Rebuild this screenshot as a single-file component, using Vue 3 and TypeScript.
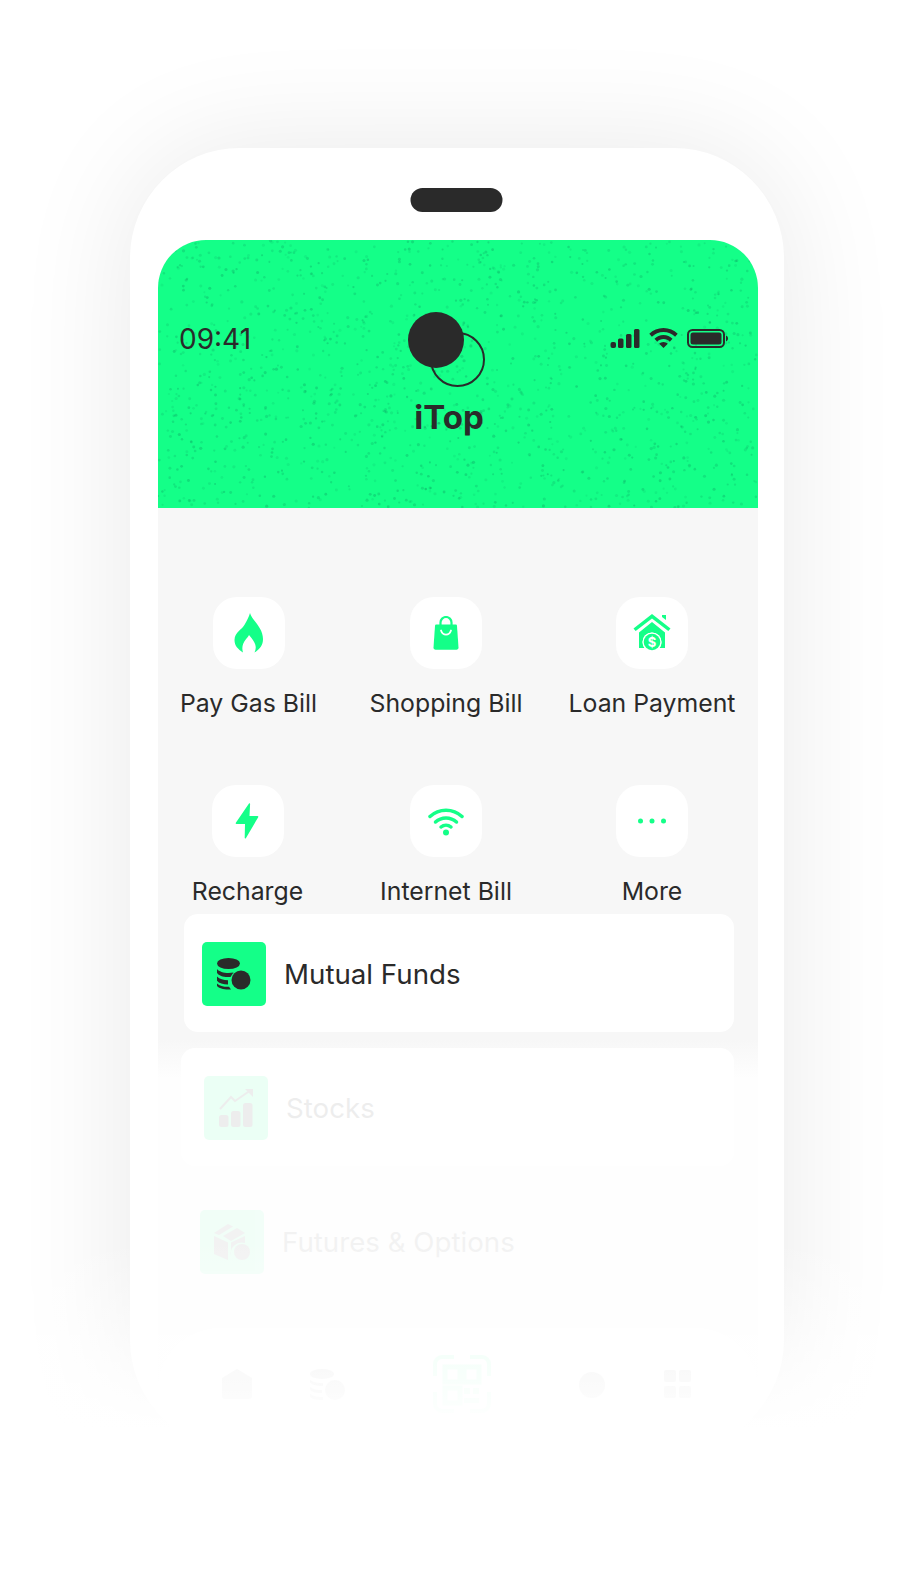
<script setup lang="ts">
interface Service {
  label: string
  icon: string
}

interface Speck {
  x: number
  y: number
  r: number
  o: number
}

const services: Service[] = [
  { label: 'Pay Gas Bill', icon: 'flame' },
  { label: 'Shopping Bill', icon: 'bag' },
  { label: 'Loan Payment', icon: 'house' },
  { label: 'Recharge', icon: 'bolt' },
  { label: 'Internet Bill', icon: 'wifi' },
  { label: 'More', icon: 'more' },
]

// seeded so the grain comes out the same on every load
let seed = 4127
function rand() {
  seed = (seed * 16807) % 2147483647
  return seed / 2147483647
}

const specks: Speck[] = []
for (let i = 0; i < 1500; i++) {
  specks.push({
    x: rand() * 600,
    y: rand() * 268,
    r: 1 + rand() * 0.6,
    o: 0.1 + rand() * 0.2,
  })
}
</script>

<template>
  <div class="page">
    <div class="phone">
      <div class="notch"></div>
      <div class="screen">
        <header class="hero">
          <svg class="grain" width="600" height="268" aria-hidden="true">
            <circle
              v-for="(s, i) in specks"
              :key="i"
              :cx="s.x"
              :cy="s.y"
              :r="s.r"
              :opacity="s.o"
            />
          </svg>
          <div class="status">
            <span class="time">09:41</span>
            <div class="status-icons">
              <svg width="30" height="19" viewBox="0 0 30 19">
                <rect x="0.5" y="13" width="5.5" height="6" rx="2" />
                <rect x="8" y="9.5" width="5.5" height="9.5" rx="1.5" />
                <rect x="16" y="5" width="5.5" height="14" rx="1.5" />
                <rect x="24" y="0" width="5.5" height="19" rx="1.5" />
              </svg>
              <svg width="29" height="20" viewBox="0 0 29 20">
                <path d="M14.5 0C9 0 4 2.2 0.3 5.8l2.6 3C5.9 5.900 10 4 14.500 4s8.600 1.900 11.600 4.800l2.600-3C25 2.200 20 0 14.500 0z" />
                <path d="M14.500 7c-3.500 0-6.700 1.400-9 3.700l2.700 3c1.600-1.700 3.800-2.700 6.300-2.700s4.700 1 6.300 2.700l2.700-3c-2.300-2.300-5.500-3.700-9-3.700z" />
                <path d="M14.500 14c-1.700 0-3.200.7-4.300 1.800l4.300 4.200 4.300-4.200c-1.100-1.100-2.600-1.800-4.300-1.800z" />
              </svg>
              <svg width="41" height="19" viewBox="0 0 41 19">
                <rect x="1" y="1" width="36" height="17" rx="4.500" class="batt-shell" />
                <rect x="3.500" y="3.500" width="31" height="12" rx="2.500" />
                <path d="M39 6.500c1.200.4 2 1.600 2 3s-.8 2.600-2 3z" />
              </svg>
            </div>
          </div>
          <div class="brand">
            <div class="logo">
              <span class="logo-ring"></span>
              <span class="logo-dot"></span>
            </div>
            <span class="brand-name">iTop</span>
          </div>
        </header>

        <section class="services">
          <div v-for="item in services" :key="item.label" class="service">
            <div class="tile">
              <svg v-if="item.icon === 'flame'" width="30" height="40" viewBox="0 0 30 40">
                <path d="M16 0c1 6 13 14 13 26 0 6-3 10-8.500 13.500 2.500-5.500 1.500-9.500-5.500-17.500-1 3-9 8-6 17.500C4 36 .5 33 .5 27 .5 19 8 17 11 11c2-4 4-7 5-11z" />
              </svg>
              <svg v-else-if="item.icon === 'bag'" width="26" height="34" viewBox="0 0 26 34">
                <path d="M7.500 9V6.500a5.500 5.500 0 0 1 11 0V9" fill="none" stroke="#14ff88" stroke-width="2.200" />
                <path d="M3.500 8.500h19c.9 0 1.400.5 1.500 1.400L25.500 31.500c0 1.300-.8 2.200-2 2.200h-21c-1.200 0-2-.9-2-2.200L2 9.900c.1-.9.600-1.400 1.500-1.400z" />
                <path d="M8 14.500c1 3 3 4.200 5 4.200s4-1.200 5-4.200" fill="none" stroke="#fff" stroke-width="1.800" stroke-linecap="round" />
              </svg>
              <svg v-else-if="item.icon === 'house'" width="38" height="38" viewBox="0 0 38 38">
                <path d="M29 1h4v5l-4-3z" />
                <path d="M.500 14.500 19 0l18.500 14.500-2.200 2.600L19 4.500 2.700 17.100z" />
                <path d="M19 8 6 18.500V34h5.500a10 10 0 0 1-2-6 9.500 9.500 0 0 1 19 0c0 2.300-.7 4.300-2 6H32V18.500z" />
                <circle cx="19" cy="28" r="9.500" fill="#fff" />
                <circle cx="19" cy="28" r="8.300" />
                <text x="19" y="32.500" class="house-dollar">$</text>
              </svg>
              <svg v-else-if="item.icon === 'bolt'" class="bolt-icon" width="24" height="36" viewBox="0 0 24 36">
                <path d="M14 .5c.5-.4 1.100-.2 1.100.6L14.500 13h8c.8 0 1 .6.700 1.200L11 35c-.5.900-1.300.6-1.300-.3L10 21H1.500C.6 21 .4 20.300 1 19.600z" />
              </svg>
              <svg v-else-if="item.icon === 'wifi'" width="36" height="30" viewBox="0 0 36 30" class="wifi-icon">
                <path d="M2 10.500C11 2 25 2 34 10.500" />
                <path d="M7.500 16c6-5.500 15-5.500 21 0" />
                <path d="M13 21c3-2.500 7-2.500 10 0" />
                <circle cx="18" cy="26.500" r="3" />
              </svg>
              <svg v-else width="28" height="8" viewBox="0 0 28 8">
                <circle cx="2.500" cy="4" r="2.500" />
                <circle cx="14" cy="4" r="2.500" />
                <circle cx="25.500" cy="4" r="2.500" />
              </svg>
            </div>
            <span class="service-label">{{ item.label }}</span>
          </div>
        </section>

        <div class="fund-card">
          <div class="fund-icon">
            <svg width="34" height="32" viewBox="0 0 34 32">
              <ellipse cx="11.500" cy="5.500" rx="11.500" ry="5.500" />
              <path d="M0 11c2 2.500 6.500 4 11.500 4 1.500 0 3.500-.2 5-.5l-3 4.400c-6 .8-11.500-1-13.500-3.900z" />
              <path d="M0 18.500c2.500 2.500 6.500 3.700 11 3.700v4.300c-5 0-9-1.300-11-3.800z" />
              <path d="M0 25.500c2.500 2.500 7 3.500 12 3.300l2 2.700c-6.500.5-12-1-14-3.500z" />
              <circle cx="24" cy="22" r="9.500" />
            </svg>
          </div>
          <span class="fund-label">Mutual Funds</span>
        </div>

        <div class="ghost-card stocks">
          <div class="fund-icon">
            <svg width="34" height="38" viewBox="0 0 34 38">
              <rect x="0" y="26" width="9.500" height="12" rx="2.500" />
              <rect x="12" y="22" width="9.500" height="16" rx="2.500" />
              <rect x="24" y="14" width="9.500" height="24" rx="2.500" />
              <path d="M1 20 12 8l4 4L32 1" fill="none" stroke="#2a2a2a" stroke-width="2" />
              <path d="M26 0h8v8z" />
            </svg>
          </div>
          <span class="fund-label">Stocks</span>
        </div>

        <div class="ghost-row futures">
          <div class="fund-icon">
            <svg width="36" height="36" viewBox="0 0 36 36">
              <path d="M0 9 14 0l5 2.500L5 11z" />
              <path d="M9 12 23 4l8 5-14 8z" />
              <path d="M0 12l14 6.500V36L0 30z" />
              <path d="M17 18.500 31 12v7a11 11 0 0 0-14 13z" />
              <circle cx="28" cy="28" r="8" />
            </svg>
          </div>
          <span class="fund-label">Futures &amp; Options</span>
        </div>

        <nav class="tabbar">
          <svg class="tab-home" width="30" height="30" viewBox="0 0 30 30">
            <path d="M15 0 30 9v18a3 3 0 0 1-3 3H3a3 3 0 0 1-3-3V9z" />
          </svg>
          <svg class="tab-coins" width="35" height="31" viewBox="0 0 35 31">
            <ellipse cx="12" cy="5" rx="12" ry="5" />
            <path d="M0 11c3 2.500 8 3 13 3v3c-6 0-11-1-13-3.500z" />
            <path d="M0 18c3 2.500 7 3 12 3v3c-6 0-11-1-12-3.500z" />
            <path d="M0 25c3 2.500 7 3 13 3v3c-7 0-12-1-13-3.500z" />
            <circle cx="25" cy="21" r="10" />
          </svg>
          <svg class="tab-scan" width="58" height="58" viewBox="0 0 58 58">
            <path d="M21 2H9a7 7 0 0 0-7 7v12M37 2h12a7 7 0 0 1 7 7v12M21 56H9a7 7 0 0 1-7-7V37M37 56h12a7 7 0 0 0 7-7V37" fill="none" stroke="#14ff88" stroke-width="4" />
            <path d="M12 12h15v15H12zM31 12h15v15H31zM12 33h15v15H12z" fill="none" stroke="#14ff88" stroke-width="5" />
            <path d="M31 33h6v6h-6zM40 33h6v6h-6zM31 43h15v5H31z" fill="#14ff88" />
          </svg>
          <svg class="tab-clock" width="26" height="26" viewBox="0 0 26 26">
            <circle cx="13" cy="13" r="13" />
          </svg>
          <svg class="tab-grid" width="27" height="28" viewBox="0 0 27 28">
            <rect width="12" height="12" rx="2" />
            <rect x="15" width="12" height="12" rx="2" />
            <rect y="16" width="12" height="12" rx="2" />
            <rect x="15" y="16" width="12" height="12" rx="2" />
          </svg>
        </nav>
      </div>
    </div>
    <div class="bottom-fade"></div>
  </div>
</template>

<style>
html,
body {
  margin: 0;
  background: #fff;
}
</style>

<style scoped>
.page {
  position: relative;
  width: 922px;
  height: 1585px;
  overflow: hidden;
  background: #fff;
  font-family: Inter, "Liberation Sans", sans-serif;
  color: #2a2a2a;
  padding-top: 148px;
  box-sizing: border-box;
}

.phone {
  width: 654px;
  height: 1302px;
  margin-left: 130px;
  background: #fff;
  border-radius: 110px;
  box-shadow: 0 0 120px rgba(0, 0, 0, 0.09);
  padding: 40px 26px 0 28px;
  box-sizing: border-box;
  overflow: hidden;
}

.bottom-fade {
  position: absolute;
  left: 0;
  right: 0;
  top: 1240px;
  bottom: 0;
  background: linear-gradient(rgba(255, 255, 255, 0), #fff 190px);
  pointer-events: none;
}

.notch {
  width: 92px;
  height: 24px;
  border-radius: 12px;
  background: #2a2a2a;
  margin: 0 auto 28px;
  transform: translateX(-1.500px);
}

.screen {
  height: 1210px;
  background: linear-gradient(#f7f7f7 0, #f7f7f7 800px, #fefefe 838px);
  border-radius: 48px 48px 0 0;
}

.hero {
  position: relative;
  height: 268px;
  background: #14ff88;
  border-radius: 48px 48px 0 0;
  overflow: hidden;
  box-sizing: border-box;
  padding-top: 75px;
}

.grain {
  position: absolute;
  inset: 0;
  fill: #0b8a58;
}

.status {
  position: relative;
  display: flex;
  justify-content: space-between;
  align-items: center;
  height: 46px;
  padding: 0 30px 0 21px;
}

.time {
  font-size: 28px;
  line-height: 46px;
  padding-top: 2px;
}

.status-icons {
  display: flex;
  align-items: center;
  gap: 9px;
}

.status-icons svg {
  fill: #2a2a2a;
}

.batt-shell {
  fill: none;
  stroke: #2a2a2a;
  stroke-width: 2;
}

.brand {
  position: absolute;
  top: 72px;
  left: 250px;
  width: 78px;
  display: flex;
  flex-direction: column;
  align-items: center;
}

.logo {
  position: relative;
  width: 78px;
  height: 76px;
}

.logo-dot {
  position: absolute;
  left: 0;
  top: 0;
  width: 56px;
  height: 56px;
  border-radius: 50%;
  background: #2a2a2a;
}

.logo-ring {
  position: absolute;
  left: 22px;
  top: 20px;
  width: 51px;
  height: 51px;
  border-radius: 50%;
  border: 2px solid #2a2a2a;
}

.brand-name {
  font-size: 33px;
  font-weight: 700;
  line-height: 40px;
  margin-top: 9px;
  transform: translateX(2px);
}

.services {
  display: grid;
  grid-template-columns: 181px 214px 198px;
  row-gap: 67px;
  padding-top: 89px;
}

.service {
  display: flex;
  flex-direction: column;
  align-items: center;
  gap: 19px;
}

.service:nth-child(4) {
  margin-left: -2px;
}

.tile {
  width: 72px;
  height: 72px;
  background: #fff;
  border-radius: 24px;
  display: flex;
  align-items: center;
  justify-content: center;
}

.tile svg {
  fill: #14ff88;
}

.bolt-icon {
  margin-right: 2px;
}

.wifi-icon path {
  fill: none;
  stroke: #14ff88;
  stroke-width: 3.500;
  stroke-linecap: round;
}

.house-dollar {
  font-family: Inter, "Liberation Sans", sans-serif;
  font-size: 13px;
  font-weight: 700;
  fill: #fff;
  text-anchor: middle;
}

.service-label {
  font-size: 24.800px;
  line-height: 30px;
  white-space: nowrap;
}

.fund-card {
  display: flex;
  align-items: center;
  gap: 18px;
  height: 118px;
  margin: 8px 24px 0 26px;
  padding: 2px 0 0 18px;
  box-sizing: border-box;
  background: #fff;
  border-radius: 14px;
}

.fund-icon {
  width: 64px;
  height: 64px;
  flex: none;
  border-radius: 5px;
  background: #14ff88;
  display: flex;
  align-items: center;
  justify-content: center;
}

.fund-icon svg {
  fill: #2a2a2a;
}

.fund-label {
  font-size: 27.700px;
}

.ghost-card,
.ghost-row {
  display: flex;
  align-items: center;
  gap: 18px;
}

.stocks {
  height: 118px;
  margin: 16px 24px 0 23px;
  padding: 2px 0 0 23px;
  box-sizing: border-box;
  background: #fff;
  border-radius: 14px;
}

.stocks > * {
  opacity: 0.08;
}

.futures {
  height: 64px;
  margin: 44px 24px 0 42px;
}

.futures > * {
  opacity: 0.05;
}

.tabbar {
  position: relative;
  height: 130px;
  margin-top: 54px;
  background: #fff;
  border-radius: 62px 62px 0 0;
}

.tabbar svg {
  position: absolute;
  fill: #2a2a2a;
  opacity: 0.08;
}

.tab-home {
  left: 64px;
  top: 41px;
}

.tab-coins {
  left: 152px;
  top: 41px;
}

.tabbar .tab-scan {
  left: 275px;
  top: 27px;
  opacity: 0.1;
}

.tab-clock {
  left: 421px;
  top: 44px;
}

.tab-grid {
  left: 506px;
  top: 42px;
}
</style>
